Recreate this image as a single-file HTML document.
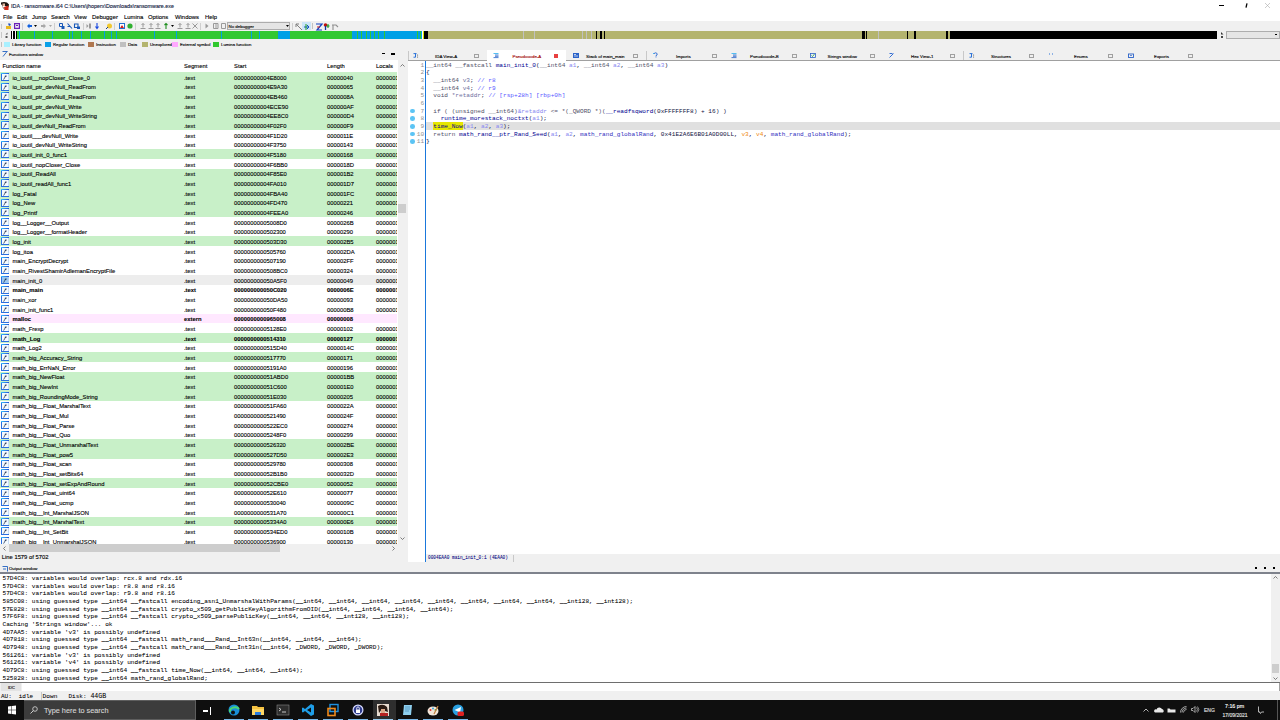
<!DOCTYPE html><html><head><meta charset="utf-8"><style>
*{margin:0;padding:0;box-sizing:border-box}
html,body{width:1280px;height:720px;overflow:hidden;background:#f0f0f0;font-family:"Liberation Sans", sans-serif;font-size:5.84px;color:#000}
.a{position:absolute}
.t{position:absolute;white-space:pre;line-height:1;-webkit-text-stroke:0.12px currentColor}
.m{font-family:"Liberation Mono", monospace;font-size:6.11px;-webkit-text-stroke:0.05px currentColor}
svg{position:absolute;overflow:visible}
</style></head><body>
<svg width="0" height="0" style="position:absolute"><defs><linearGradient id="ig" gradientUnits="userSpaceOnUse" x1="0" y1="0" x2="8" y2="0"><stop offset="0" stop-color="#38c8ff"/><stop offset="1" stop-color="#2050d8"/></linearGradient></defs></svg>
<div class="a" style="left:0px;top:0px;width:1280px;height:12px;background:#fff;"></div>
<svg style="left:1px;top:2px" width="8" height="8" viewBox="0 0 8 8"><path d="M0 0.5Q3 -0.5 6 0.5L8 2.5 7.5 5.5 5.5 4.5 3 3.5 1.5 4 0 2z" fill="#1e1410"/><path d="M1.5 1.5h2.5v2.5h-2.5z" fill="#e0b8a0"/><path d="M3 5L7.5 3.5 7.5 8 3.5 8z" fill="#d02818"/><path d="M1.5 4.5l2 3" stroke="#8a5040" stroke-width="0.8"/></svg>
<div class="t" style="left:11px;top:3.53px;font-size:5.4px;color:#102040">IDA - ransomware.i64 C:\Users\jhoperx\Downloads\ransomware.exe</div>
<div class="a" style="left:1219px;top:5px;width:5px;height:1px;background:#000;"></div>
<svg style="left:1244.5px;top:3px" width="3" height="5"><path d="M2 0.3L1 4.7" stroke="#000" stroke-width="1.3"/></svg>
<svg style="left:1265px;top:3px" width="5" height="5" viewBox="0 0 5 5"><path d="M0 0L5 5M5 0L0 5" stroke="#aaa" stroke-width="0.6"/></svg>
<div class="a" style="left:0px;top:12px;width:1280px;height:9px;background:#fff;"></div>
<div class="t" style="left:3px;top:15.11px;font-size:5.9px;">File</div>
<div class="t" style="left:17px;top:15.11px;font-size:5.9px;">Edit</div>
<div class="t" style="left:32px;top:15.11px;font-size:5.9px;">Jump</div>
<div class="t" style="left:51px;top:15.11px;font-size:5.9px;">Search</div>
<div class="t" style="left:74px;top:15.11px;font-size:5.9px;">View</div>
<div class="t" style="left:92px;top:15.11px;font-size:5.9px;">Debugger</div>
<div class="t" style="left:124px;top:15.11px;font-size:5.9px;">Lumina</div>
<div class="t" style="left:148px;top:15.11px;font-size:5.9px;">Options</div>
<div class="t" style="left:175px;top:15.11px;font-size:5.9px;">Windows</div>
<div class="t" style="left:205px;top:15.11px;font-size:5.9px;">Help</div>
<div class="a" style="left:0px;top:21px;width:1280px;height:10px;background:#f0f0f0;"></div>
<div class="a" style="left:1px;top:23.5px;width:1px;height:5px;background:#c8c8c8;"></div>
<div class="a" style="left:1px;top:32px;width:1px;height:6px;background:#c8c8c8;"></div>
<svg style="left:5px;top:32px" width="3" height="7"><path d="M2.5 0.5v2h-2z" fill="#555"/><rect x="0.5" y="4" width="2" height="2" fill="#555"/></svg>
<svg style="left:6px;top:23px" width="6" height="6" viewBox="0 0 6 6"><path d="M0 3h5v3h-5z" fill="#e8b820"/><path d="M2 0.5h2l1 1.5-2 1z" fill="#2050c0"/></svg>
<svg style="left:14px;top:23px" width="6" height="6" viewBox="0 0 6 6"><path d="M0.6 0.6h4.8v4.8h-4.8z" fill="none" stroke="#6a20b8" stroke-width="1.2"/><path d="M2 2.5h2" stroke="#6a20b8"/></svg>
<div class="a" style="left:22px;top:22.5px;width:1px;height:7px;background:#cfcfcf;"></div>
<svg style="left:27px;top:23px" width="5" height="6" viewBox="0 0 5 6"><path d="M0 3l2.5-2.5v1.5h2.5v2h-2.5v1.5z" fill="#1060e0"/></svg>
<svg style="left:34px;top:23px" width="3" height="6" viewBox="0 0 3 6"><path d="M0 2h3l-1.5 2z" fill="#000"/></svg>
<svg style="left:41px;top:23px" width="5" height="6" viewBox="0 0 5 6"><path d="M5 3l-2.5-2.5v1.5h-2.5v2h2.5v1.5z" fill="#a8a8a8"/></svg>
<svg style="left:49px;top:23px" width="3" height="6" viewBox="0 0 3 6"><path d="M0 2h3l-1.5 2z" fill="#a8a8a8"/></svg>
<div class="a" style="left:54px;top:22.5px;width:1px;height:7px;background:#cfcfcf;"></div>
<svg style="left:59px;top:23px" width="6" height="6" viewBox="0 0 6 6"><path d="M0.5 0.5h3v3h-3z" fill="none" stroke="#1858b8"/><path d="M2.5 3h3v3h-3z" fill="#1858b8"/></svg>
<svg style="left:67px;top:23px" width="6" height="6" viewBox="0 0 6 6"><path d="M0.5 0.5l4.5 5M0.5 3.5h2.5" stroke="#1858b8" stroke-width="1.1"/></svg>
<svg style="left:74px;top:23px" width="6" height="6" viewBox="0 0 6 6"><path d="M0.5 1h3.5v3.5h-3.5z" fill="none" stroke="#1858b8" stroke-width="1.1"/><path d="M3 3.5h3v2.5h-3z" fill="#1858b8"/></svg>
<div class="a" style="left:83px;top:22.5px;width:1px;height:7px;background:#cfcfcf;"></div>
<svg style="left:86px;top:23px" width="5" height="6" viewBox="0 0 5 6"><path d="M0.5 1l2 2-2 2zM3 0.5h2v5h-2z" fill="#9a9a9a"/></svg>
<svg style="left:95px;top:23px" width="4" height="6" viewBox="0 0 4 6"><path d="M2 0v5M0.5 3.5l1.5 2 1.5-2" stroke="#1848e0" stroke-width="1.1" fill="none"/></svg>
<svg style="left:106px;top:23px" width="6" height="6" viewBox="0 0 6 6"><circle cx="3.5" cy="3" r="2.5" fill="#f0c830"/><path d="M0 6l2-2" stroke="#204080"/></svg>
<div class="a" style="left:114px;top:22.5px;width:1px;height:7px;background:#cfcfcf;"></div>
<svg style="left:118.5px;top:23px" width="6" height="6" viewBox="0 0 6 6"><rect x="0.5" y="0.5" width="5" height="5" fill="#fff" stroke="#2070d0"/><path d="M1 5l2-3 2 3z" fill="#d02020"/></svg>
<svg style="left:126.5px;top:23px" width="6" height="6" viewBox="0 0 6 6"><circle cx="3" cy="3" r="2.6" fill="#30b030"/></svg>
<div class="a" style="left:135px;top:22.5px;width:1px;height:7px;background:#cfcfcf;"></div>
<svg style="left:140px;top:23px" width="6" height="6" viewBox="0 0 6 6"><path d="M0.5 5.5h5M3 0.5v4M1.5 2l1.5-1.5 1.5 1.5" stroke="#9a9a9a" fill="none"/></svg>
<svg style="left:148px;top:23px" width="6" height="6" viewBox="0 0 6 6"><path d="M0.5 5.5h5M3 0.5v4M1.5 2l1.5-1.5 1.5 1.5" stroke="#9a9a9a" fill="none"/></svg>
<svg style="left:155px;top:23px" width="6" height="6" viewBox="0 0 6 6"><path d="M0.5 5.5h5M3 0.5v4M1.5 2l1.5-1.5 1.5 1.5" stroke="#9a9a9a" fill="none"/></svg>
<svg style="left:177px;top:23px" width="6" height="6" viewBox="0 0 6 6"><path d="M0.5 5.5h5M3 0.5v4M1.5 2l1.5-1.5 1.5 1.5" stroke="#9a9a9a" fill="none"/></svg>
<svg style="left:184.5px;top:23px" width="6" height="6" viewBox="0 0 6 6"><path d="M0.5 5.5h5M3 0.5v4M1.5 2l1.5-1.5 1.5 1.5" stroke="#9a9a9a" fill="none"/></svg>
<svg style="left:164px;top:23px" width="4" height="6" viewBox="0 0 4 6"><path d="M2 6v-5.5M0.5 2l1.5-1.5 1.5 1.5" stroke="#209020" stroke-width="1.1" fill="none"/></svg>
<svg style="left:171px;top:23px" width="3" height="6" viewBox="0 0 3 6"><path d="M0 2h3l-1.5 2z" fill="#000"/></svg>
<svg style="left:192px;top:23px" width="6" height="6" viewBox="0 0 6 6"><path d="M0.5 0.5l5 5M5.5 0.5l-5 5" stroke="#9a9a9a"/></svg>
<div class="a" style="left:200px;top:22.5px;width:1px;height:7px;background:#cfcfcf;"></div>
<svg style="left:205px;top:23px" width="4" height="6" viewBox="0 0 4 6"><path d="M0.5 0.5l3 2.5-3 2.5z" fill="#9a9a9a"/></svg>
<svg style="left:212.5px;top:23px" width="6" height="6" viewBox="0 0 6 6"><path d="M0.5 0.5h4.5v5h-4.5z" fill="none" stroke="#9a9a9a"/><path d="M3 0.5v5" stroke="#9a9a9a"/></svg>
<svg style="left:220.5px;top:23px" width="5" height="6" viewBox="0 0 5 6"><path d="M0.5 0.5h4v5h-4z" fill="none" stroke="#9a9a9a"/></svg>
<div class="a" style="left:227px;top:22px;width:63px;height:8px;background:#e5e5e5;border:1px solid #adadad"></div>
<div class="t" style="left:228.5px;top:24.88px;font-size:4.4px;">No debugger</div>
<svg style="left:286px;top:25px" width="3" height="2"><path d="M0 0h3l-1.5 2z" fill="#000"/></svg>
<div class="a" style="left:292px;top:22.5px;width:1px;height:7px;background:#cfcfcf;"></div>
<svg style="left:295px;top:23px" width="6" height="6" viewBox="0 0 6 6"><path d="M1 1l6 6M1 1h3M1 1v3" stroke="#808080" fill="none"/></svg>
<div class="a" style="left:302px;top:22px;width:9px;height:8px;background:#cce4f7;"></div>
<svg style="left:303px;top:23px" width="6" height="6" viewBox="0 0 6 6"><path d="M1 4h5M4 2l2 2-2 2" stroke="#1050c0" fill="none"/><path d="M3 1v6" stroke="#20a020"/></svg>
<div class="a" style="left:312px;top:23px;width:1px;height:6px;background:#c0c0c0;"></div>
<svg style="left:315px;top:23px" width="6" height="6" viewBox="0 0 6 6"><path d="M1 1h6l-5 6h5" stroke="#1040c0" stroke-width="1.2" fill="none"/><path d="M2 4h3" stroke="#d02020"/></svg>
<svg style="left:323px;top:23px" width="6" height="6" viewBox="0 0 6 6"><circle cx="2.5" cy="2" r="1.8" fill="#c01010"/><path d="M2.5 3v4" stroke="#1030a0" stroke-width="1.3"/><path d="M5 1v4M3.5 3h3" stroke="#109010"/></svg>
<svg style="left:331px;top:23px" width="6" height="6" viewBox="0 0 6 6"><path d="M1 2h4l2 2M2 2v5" stroke="#909090" fill="none" stroke-width="1.1"/></svg>
<div class="a" style="left:11px;top:31px;width:1206px;height:8px;background:#000;"></div>
<div class="a" style="left:16.9px;top:31px;width:261.1px;height:8px;background:#32c832;"></div>
<div class="a" style="left:278px;top:31px;width:12px;height:8px;background:#00a0e6;"></div>
<div class="a" style="left:290px;top:31px;width:62px;height:8px;background:#32c832;"></div>
<div class="a" style="left:352px;top:31px;width:70px;height:8px;background:#00a0e6;"></div>
<div class="a" style="left:427.5px;top:31px;width:434.5px;height:8px;background:#b4b46e;"></div>
<div class="a" style="left:866.5px;top:31px;width:40.0px;height:8px;background:#b4b46e;"></div>
<div class="a" style="left:907.5px;top:31px;width:6.5px;height:8px;background:#b4b46e;"></div>
<div class="a" style="left:916px;top:31px;width:30px;height:8px;background:#b4b46e;"></div>
<div class="a" style="left:12px;top:31px;width:0.9px;height:8px;background:#fff;"></div>
<div class="a" style="left:14.9px;top:31px;width:1.1px;height:8px;background:#fff;"></div>
<div class="a" style="left:18.9px;top:31px;width:0.8px;height:8px;background:#00a0e6;"></div>
<div class="a" style="left:34px;top:31px;width:0.8px;height:8px;background:#00a0e6;"></div>
<div class="a" style="left:52px;top:31px;width:0.8px;height:8px;background:#00a0e6;"></div>
<div class="a" style="left:68.5px;top:31px;width:0.8px;height:8px;background:#00a0e6;"></div>
<div class="a" style="left:71.5px;top:31px;width:0.8px;height:8px;background:#00a0e6;"></div>
<div class="a" style="left:81px;top:31px;width:0.8px;height:8px;background:#00a0e6;"></div>
<div class="a" style="left:90px;top:31px;width:0.8px;height:8px;background:#00a0e6;"></div>
<div class="a" style="left:103.5px;top:31px;width:0.8px;height:8px;background:#00a0e6;"></div>
<div class="a" style="left:111px;top:31px;width:0.8px;height:8px;background:#00a0e6;"></div>
<div class="a" style="left:116px;top:31px;width:0.8px;height:8px;background:#00a0e6;"></div>
<div class="a" style="left:154px;top:31px;width:0.8px;height:8px;background:#00a0e6;"></div>
<div class="a" style="left:175.5px;top:31px;width:0.8px;height:8px;background:#00a0e6;"></div>
<div class="a" style="left:220.5px;top:31px;width:0.8px;height:8px;background:#00a0e6;"></div>
<div class="a" style="left:250.5px;top:31px;width:0.8px;height:8px;background:#00a0e6;"></div>
<div class="a" style="left:258.5px;top:31px;width:0.8px;height:8px;background:#00a0e6;"></div>
<div class="a" style="left:357px;top:31px;width:0.8px;height:8px;background:#32c832;"></div>
<div class="a" style="left:361px;top:31px;width:0.8px;height:8px;background:#32c832;"></div>
<div class="a" style="left:365.5px;top:31px;width:0.8px;height:8px;background:#32c832;"></div>
<div class="a" style="left:370px;top:31px;width:0.8px;height:8px;background:#32c832;"></div>
<div class="a" style="left:374px;top:31px;width:0.8px;height:8px;background:#32c832;"></div>
<div class="a" style="left:378px;top:31px;width:0.8px;height:8px;background:#32c832;"></div>
<div class="a" style="left:383.5px;top:31px;width:0.8px;height:8px;background:#32c832;"></div>
<div class="a" style="left:416.5px;top:31px;width:0.8px;height:8px;background:#32c832;"></div>
<div class="a" style="left:420px;top:31px;width:0.8px;height:8px;background:#32c832;"></div>
<div class="a" style="left:422px;top:31px;width:1px;height:8px;background:#fff;"></div>
<div class="a" style="left:423px;top:31px;width:1px;height:8px;background:#e0e000;"></div>
<div class="a" style="left:522.5px;top:31px;width:1px;height:8px;background:#c0c0c0;"></div>
<div class="a" style="left:533.5px;top:31px;width:1px;height:8px;background:#c0c0c0;"></div>
<div class="a" style="left:582px;top:31px;width:1px;height:8px;background:#c0c0c0;"></div>
<div class="a" style="left:586px;top:31px;width:1px;height:8px;background:#c0c0c0;"></div>
<div class="a" style="left:590.5px;top:31px;width:1px;height:8px;background:#c0c0c0;"></div>
<div class="a" style="left:877.5px;top:31px;width:1px;height:8px;background:#c0c0c0;"></div>
<div class="a" style="left:596px;top:31px;width:1px;height:8px;background:#000;"></div>
<div class="a" style="left:600px;top:31px;width:1.5px;height:8px;background:#000;"></div>
<div class="a" style="left:604px;top:31px;width:1px;height:8px;background:#000;"></div>
<div class="a" style="left:948px;top:31px;width:2px;height:8px;background:#b4b46e;"></div>
<div class="a" style="left:865.3px;top:31px;width:1px;height:8px;background:#b4b46e;"></div>
<svg style="left:1221px;top:32px" width="3" height="7"><path d="M0 0v2.5h2.5z" fill="#333"/><rect x="0" y="4" width="2" height="2" fill="#444"/></svg>
<div class="a" style="left:1226px;top:31px;width:53.5px;height:8px;background:#e5e5e5;border:1px solid #adadad"></div>
<div class="a" style="left:1275px;top:34.2px;width:2px;height:1px;background:#000;"></div>
<div class="a" style="left:1px;top:42px;width:1px;height:5px;background:#c0c0c0;"></div>
<div class="a" style="left:4px;top:42px;width:6px;height:5px;background:#a8f0ff;"></div>
<div class="t" style="left:12px;top:43.16px;font-size:4.3px;">Library function</div>
<div class="a" style="left:45px;top:42px;width:6px;height:5px;background:#0aa0e8;"></div>
<div class="t" style="left:53px;top:43.16px;font-size:4.3px;">Regular function</div>
<div class="a" style="left:88px;top:42px;width:6px;height:5px;background:#b07850;"></div>
<div class="t" style="left:96px;top:43.16px;font-size:4.3px;">Instruction</div>
<div class="a" style="left:120px;top:42px;width:6px;height:5px;background:#c0c0c0;"></div>
<div class="t" style="left:128px;top:43.16px;font-size:4.3px;">Data</div>
<div class="a" style="left:142px;top:42px;width:6px;height:5px;background:#b4b46e;"></div>
<div class="t" style="left:150px;top:43.16px;font-size:4.3px;">Unexplored</div>
<div class="a" style="left:172px;top:42px;width:6px;height:5px;background:#ffa8ff;"></div>
<div class="t" style="left:180px;top:43.16px;font-size:4.3px;">External symbol</div>
<div class="a" style="left:213px;top:42px;width:6px;height:5px;background:#30c830;"></div>
<div class="t" style="left:221px;top:43.16px;font-size:4.3px;">Lumina function</div>
<svg style="left:2px;top:51px" width="6" height="6" viewBox="0 0 6 6"><path d="M0.5 0.5h5M1 5.5l4-5" stroke="#2060c0" stroke-width="0.9" fill="none"/></svg>
<div class="t" style="left:9px;top:52.56px;font-size:4.3px;">Functions window</div>
<div class="a" style="left:381.5px;top:53.3px;width:3.5px;height:1px;background:#000;"></div>
<div class="a" style="left:391px;top:53px;width:3.5px;height:1.6px;background:#000;"></div>
<div class="a" style="left:408px;top:51px;width:1px;height:10px;background:#c8c8c8;"></div>
<div class="a" style="left:0px;top:60px;width:398px;height:483.5px;background:#fff;"></div>
<div class="t" style="left:2.4px;top:63.96px;font-size:5.84px;">Function name</div>
<div class="t" style="left:184px;top:63.96px;font-size:5.84px;">Segment</div>
<div class="t" style="left:234px;top:63.96px;font-size:5.84px;">Start</div>
<div class="t" style="left:327px;top:63.96px;font-size:5.84px;">Length</div>
<div class="t" style="left:376px;top:63.96px;font-size:5.84px;">Locals</div>
<div class="a" style="left:0;top:60px;width:397px;height:483.5px;overflow:hidden">
<div class="a" style="left:0px;top:12.0px;width:397px;height:9.68px;background:#c8f0c8"></div>
<svg style="left:1px;top:12.9px" width="8" height="8" viewBox="0 0 8 8"><rect x="0" y="0" width="8" height="8" fill="#f4faff"/><path d="M0.5 0v8M0 7.5h8" stroke="#2a6ee0"/><path d="M0 0.5h8" stroke="url(#ig)"/><path d="M7.6 1v6" stroke="#b8d0f0" stroke-width="0.8"/><path d="M2.6 6.6l2.4-4.2M3.8 3.3h1.8" stroke="#102040" stroke-width="0.7"/></svg>
<div class="t" style="left:12.5px;top:15.66px;">io_ioutil__nopCloser_Close_0</div>
<div class="t" style="left:184px;top:15.66px;">.text</div>
<div class="t" style="left:234px;top:15.66px;">00000000004E8000</div>
<div class="t" style="left:327px;top:15.66px;">00000040</div>
<div class="t" style="left:376px;top:15.66px;">00000010</div>
<div class="a" style="left:0px;top:21.67px;width:397px;height:9.68px;background:#c8f0c8"></div>
<svg style="left:1px;top:22.57px" width="8" height="8" viewBox="0 0 8 8"><rect x="0" y="0" width="8" height="8" fill="#f4faff"/><path d="M0.5 0v8M0 7.5h8" stroke="#2a6ee0"/><path d="M0 0.5h8" stroke="url(#ig)"/><path d="M7.6 1v6" stroke="#b8d0f0" stroke-width="0.8"/><path d="M2.6 6.6l2.4-4.2M3.8 3.3h1.8" stroke="#102040" stroke-width="0.7"/></svg>
<div class="t" style="left:12.5px;top:25.33px;">io_ioutil_ptr_devNull_ReadFrom</div>
<div class="t" style="left:184px;top:25.33px;">.text</div>
<div class="t" style="left:234px;top:25.33px;">00000000004E9A30</div>
<div class="t" style="left:327px;top:25.33px;">00000065</div>
<div class="t" style="left:376px;top:25.33px;">00000010</div>
<div class="a" style="left:0px;top:31.33px;width:397px;height:9.68px;background:#c8f0c8"></div>
<svg style="left:1px;top:32.23px" width="8" height="8" viewBox="0 0 8 8"><rect x="0" y="0" width="8" height="8" fill="#f4faff"/><path d="M0.5 0v8M0 7.5h8" stroke="#2a6ee0"/><path d="M0 0.5h8" stroke="url(#ig)"/><path d="M7.6 1v6" stroke="#b8d0f0" stroke-width="0.8"/><path d="M2.6 6.6l2.4-4.2M3.8 3.3h1.8" stroke="#102040" stroke-width="0.7"/></svg>
<div class="t" style="left:12.5px;top:34.99px;">io_ioutil_ptr_devNull_ReadFrom</div>
<div class="t" style="left:184px;top:34.99px;">.text</div>
<div class="t" style="left:234px;top:34.99px;">00000000004EB460</div>
<div class="t" style="left:327px;top:34.99px;">0000008A</div>
<div class="t" style="left:376px;top:34.99px;">00000010</div>
<div class="a" style="left:0px;top:41.0px;width:397px;height:9.68px;background:#c8f0c8"></div>
<svg style="left:1px;top:41.9px" width="8" height="8" viewBox="0 0 8 8"><rect x="0" y="0" width="8" height="8" fill="#f4faff"/><path d="M0.5 0v8M0 7.5h8" stroke="#2a6ee0"/><path d="M0 0.5h8" stroke="url(#ig)"/><path d="M7.6 1v6" stroke="#b8d0f0" stroke-width="0.8"/><path d="M2.6 6.6l2.4-4.2M3.8 3.3h1.8" stroke="#102040" stroke-width="0.7"/></svg>
<div class="t" style="left:12.5px;top:44.66px;">io_ioutil_ptr_devNull_Write</div>
<div class="t" style="left:184px;top:44.66px;">.text</div>
<div class="t" style="left:234px;top:44.66px;">00000000004ECE90</div>
<div class="t" style="left:327px;top:44.66px;">000000AF</div>
<div class="t" style="left:376px;top:44.66px;">00000010</div>
<div class="a" style="left:0px;top:50.67px;width:397px;height:9.68px;background:#c8f0c8"></div>
<svg style="left:1px;top:51.57px" width="8" height="8" viewBox="0 0 8 8"><rect x="0" y="0" width="8" height="8" fill="#f4faff"/><path d="M0.5 0v8M0 7.5h8" stroke="#2a6ee0"/><path d="M0 0.5h8" stroke="url(#ig)"/><path d="M7.6 1v6" stroke="#b8d0f0" stroke-width="0.8"/><path d="M2.6 6.6l2.4-4.2M3.8 3.3h1.8" stroke="#102040" stroke-width="0.7"/></svg>
<div class="t" style="left:12.5px;top:54.33px;">io_ioutil_ptr_devNull_WriteString</div>
<div class="t" style="left:184px;top:54.33px;">.text</div>
<div class="t" style="left:234px;top:54.33px;">00000000004EE8C0</div>
<div class="t" style="left:327px;top:54.33px;">000000D4</div>
<div class="t" style="left:376px;top:54.33px;">00000010</div>
<div class="a" style="left:0px;top:60.33px;width:397px;height:9.68px;background:#c8f0c8"></div>
<svg style="left:1px;top:61.23px" width="8" height="8" viewBox="0 0 8 8"><rect x="0" y="0" width="8" height="8" fill="#f4faff"/><path d="M0.5 0v8M0 7.5h8" stroke="#2a6ee0"/><path d="M0 0.5h8" stroke="url(#ig)"/><path d="M7.6 1v6" stroke="#b8d0f0" stroke-width="0.8"/><path d="M2.6 6.6l2.4-4.2M3.8 3.3h1.8" stroke="#102040" stroke-width="0.7"/></svg>
<div class="t" style="left:12.5px;top:63.99px;">io_ioutil_devNull_ReadFrom</div>
<div class="t" style="left:184px;top:63.99px;">.text</div>
<div class="t" style="left:234px;top:63.99px;">00000000004F02F0</div>
<div class="t" style="left:327px;top:63.99px;">000000F9</div>
<div class="t" style="left:376px;top:63.99px;">00000010</div>
<svg style="left:1px;top:70.9px" width="8" height="8" viewBox="0 0 8 8"><rect x="0" y="0" width="8" height="8" fill="#f4faff"/><path d="M0.5 0v8M0 7.5h8" stroke="#2a6ee0"/><path d="M0 0.5h8" stroke="url(#ig)"/><path d="M7.6 1v6" stroke="#b8d0f0" stroke-width="0.8"/><path d="M2.6 6.6l2.4-4.2M3.8 3.3h1.8" stroke="#102040" stroke-width="0.7"/></svg>
<div class="t" style="left:12.5px;top:73.66px;">io_ioutil___devNull_Write</div>
<div class="t" style="left:184px;top:73.66px;">.text</div>
<div class="t" style="left:234px;top:73.66px;">00000000004F1D20</div>
<div class="t" style="left:327px;top:73.66px;">0000011E</div>
<div class="t" style="left:376px;top:73.66px;">00000010</div>
<svg style="left:1px;top:80.57px" width="8" height="8" viewBox="0 0 8 8"><rect x="0" y="0" width="8" height="8" fill="#f4faff"/><path d="M0.5 0v8M0 7.5h8" stroke="#2a6ee0"/><path d="M0 0.5h8" stroke="url(#ig)"/><path d="M7.6 1v6" stroke="#b8d0f0" stroke-width="0.8"/><path d="M2.6 6.6l2.4-4.2M3.8 3.3h1.8" stroke="#102040" stroke-width="0.7"/></svg>
<div class="t" style="left:12.5px;top:83.33px;">io_ioutil_devNull_WriteString</div>
<div class="t" style="left:184px;top:83.33px;">.text</div>
<div class="t" style="left:234px;top:83.33px;">00000000004F3750</div>
<div class="t" style="left:327px;top:83.33px;">00000143</div>
<div class="t" style="left:376px;top:83.33px;">00000010</div>
<div class="a" style="left:0px;top:89.33px;width:397px;height:9.68px;background:#c8f0c8"></div>
<svg style="left:1px;top:90.23px" width="8" height="8" viewBox="0 0 8 8"><rect x="0" y="0" width="8" height="8" fill="#f4faff"/><path d="M0.5 0v8M0 7.5h8" stroke="#2a6ee0"/><path d="M0 0.5h8" stroke="url(#ig)"/><path d="M7.6 1v6" stroke="#b8d0f0" stroke-width="0.8"/><path d="M2.6 6.6l2.4-4.2M3.8 3.3h1.8" stroke="#102040" stroke-width="0.7"/></svg>
<div class="t" style="left:12.5px;top:92.99px;">io_ioutil_init_0_func1</div>
<div class="t" style="left:184px;top:92.99px;">.text</div>
<div class="t" style="left:234px;top:92.99px;">00000000004F5180</div>
<div class="t" style="left:327px;top:92.99px;">00000168</div>
<div class="t" style="left:376px;top:92.99px;">00000010</div>
<svg style="left:1px;top:99.9px" width="8" height="8" viewBox="0 0 8 8"><rect x="0" y="0" width="8" height="8" fill="#f4faff"/><path d="M0.5 0v8M0 7.5h8" stroke="#2a6ee0"/><path d="M0 0.5h8" stroke="url(#ig)"/><path d="M7.6 1v6" stroke="#b8d0f0" stroke-width="0.8"/><path d="M2.6 6.6l2.4-4.2M3.8 3.3h1.8" stroke="#102040" stroke-width="0.7"/></svg>
<div class="t" style="left:12.5px;top:102.66px;">io_ioutil_nopCloser_Close</div>
<div class="t" style="left:184px;top:102.66px;">.text</div>
<div class="t" style="left:234px;top:102.66px;">00000000004F6BB0</div>
<div class="t" style="left:327px;top:102.66px;">0000018D</div>
<div class="t" style="left:376px;top:102.66px;">00000010</div>
<div class="a" style="left:0px;top:108.67px;width:397px;height:9.68px;background:#c8f0c8"></div>
<svg style="left:1px;top:109.57px" width="8" height="8" viewBox="0 0 8 8"><rect x="0" y="0" width="8" height="8" fill="#f4faff"/><path d="M0.5 0v8M0 7.5h8" stroke="#2a6ee0"/><path d="M0 0.5h8" stroke="url(#ig)"/><path d="M7.6 1v6" stroke="#b8d0f0" stroke-width="0.8"/><path d="M2.6 6.6l2.4-4.2M3.8 3.3h1.8" stroke="#102040" stroke-width="0.7"/></svg>
<div class="t" style="left:12.5px;top:112.33px;">io_ioutil_ReadAll</div>
<div class="t" style="left:184px;top:112.33px;">.text</div>
<div class="t" style="left:234px;top:112.33px;">00000000004F85E0</div>
<div class="t" style="left:327px;top:112.33px;">000001B2</div>
<div class="t" style="left:376px;top:112.33px;">00000010</div>
<div class="a" style="left:0px;top:118.33px;width:397px;height:9.68px;background:#c8f0c8"></div>
<svg style="left:1px;top:119.23px" width="8" height="8" viewBox="0 0 8 8"><rect x="0" y="0" width="8" height="8" fill="#f4faff"/><path d="M0.5 0v8M0 7.5h8" stroke="#2a6ee0"/><path d="M0 0.5h8" stroke="url(#ig)"/><path d="M7.6 1v6" stroke="#b8d0f0" stroke-width="0.8"/><path d="M2.6 6.6l2.4-4.2M3.8 3.3h1.8" stroke="#102040" stroke-width="0.7"/></svg>
<div class="t" style="left:12.5px;top:121.99px;">io_ioutil_readAll_func1</div>
<div class="t" style="left:184px;top:121.99px;">.text</div>
<div class="t" style="left:234px;top:121.99px;">00000000004FA010</div>
<div class="t" style="left:327px;top:121.99px;">000001D7</div>
<div class="t" style="left:376px;top:121.99px;">00000010</div>
<div class="a" style="left:0px;top:128.0px;width:397px;height:9.68px;background:#c8f0c8"></div>
<svg style="left:1px;top:128.9px" width="8" height="8" viewBox="0 0 8 8"><rect x="0" y="0" width="8" height="8" fill="#f4faff"/><path d="M0.5 0v8M0 7.5h8" stroke="#2a6ee0"/><path d="M0 0.5h8" stroke="url(#ig)"/><path d="M7.6 1v6" stroke="#b8d0f0" stroke-width="0.8"/><path d="M2.6 6.6l2.4-4.2M3.8 3.3h1.8" stroke="#102040" stroke-width="0.7"/></svg>
<div class="t" style="left:12.5px;top:131.66px;">log_Fatal</div>
<div class="t" style="left:184px;top:131.66px;">.text</div>
<div class="t" style="left:234px;top:131.66px;">00000000004FBA40</div>
<div class="t" style="left:327px;top:131.66px;">000001FC</div>
<div class="t" style="left:376px;top:131.66px;">00000010</div>
<div class="a" style="left:0px;top:137.67px;width:397px;height:9.68px;background:#c8f0c8"></div>
<svg style="left:1px;top:138.57px" width="8" height="8" viewBox="0 0 8 8"><rect x="0" y="0" width="8" height="8" fill="#f4faff"/><path d="M0.5 0v8M0 7.5h8" stroke="#2a6ee0"/><path d="M0 0.5h8" stroke="url(#ig)"/><path d="M7.6 1v6" stroke="#b8d0f0" stroke-width="0.8"/><path d="M2.6 6.6l2.4-4.2M3.8 3.3h1.8" stroke="#102040" stroke-width="0.7"/></svg>
<div class="t" style="left:12.5px;top:141.33px;">log_New</div>
<div class="t" style="left:184px;top:141.33px;">.text</div>
<div class="t" style="left:234px;top:141.33px;">00000000004FD470</div>
<div class="t" style="left:327px;top:141.33px;">00000221</div>
<div class="t" style="left:376px;top:141.33px;">00000010</div>
<div class="a" style="left:0px;top:147.33px;width:397px;height:9.68px;background:#c8f0c8"></div>
<svg style="left:1px;top:148.23px" width="8" height="8" viewBox="0 0 8 8"><rect x="0" y="0" width="8" height="8" fill="#f4faff"/><path d="M0.5 0v8M0 7.5h8" stroke="#2a6ee0"/><path d="M0 0.5h8" stroke="url(#ig)"/><path d="M7.6 1v6" stroke="#b8d0f0" stroke-width="0.8"/><path d="M2.6 6.6l2.4-4.2M3.8 3.3h1.8" stroke="#102040" stroke-width="0.7"/></svg>
<div class="t" style="left:12.5px;top:150.99px;">log_Printf</div>
<div class="t" style="left:184px;top:150.99px;">.text</div>
<div class="t" style="left:234px;top:150.99px;">00000000004FEEA0</div>
<div class="t" style="left:327px;top:150.99px;">00000246</div>
<div class="t" style="left:376px;top:150.99px;">00000010</div>
<svg style="left:1px;top:157.9px" width="8" height="8" viewBox="0 0 8 8"><rect x="0" y="0" width="8" height="8" fill="#f4faff"/><path d="M0.5 0v8M0 7.5h8" stroke="#2a6ee0"/><path d="M0 0.5h8" stroke="url(#ig)"/><path d="M7.6 1v6" stroke="#b8d0f0" stroke-width="0.8"/><path d="M2.6 6.6l2.4-4.2M3.8 3.3h1.8" stroke="#102040" stroke-width="0.7"/></svg>
<div class="t" style="left:12.5px;top:160.66px;">log__Logger__Output</div>
<div class="t" style="left:184px;top:160.66px;">.text</div>
<div class="t" style="left:234px;top:160.66px;">00000000005008D0</div>
<div class="t" style="left:327px;top:160.66px;">0000026B</div>
<div class="t" style="left:376px;top:160.66px;">00000010</div>
<svg style="left:1px;top:167.57px" width="8" height="8" viewBox="0 0 8 8"><rect x="0" y="0" width="8" height="8" fill="#f4faff"/><path d="M0.5 0v8M0 7.5h8" stroke="#2a6ee0"/><path d="M0 0.5h8" stroke="url(#ig)"/><path d="M7.6 1v6" stroke="#b8d0f0" stroke-width="0.8"/><path d="M2.6 6.6l2.4-4.2M3.8 3.3h1.8" stroke="#102040" stroke-width="0.7"/></svg>
<div class="t" style="left:12.5px;top:170.33px;">log__Logger__formatHeader</div>
<div class="t" style="left:184px;top:170.33px;">.text</div>
<div class="t" style="left:234px;top:170.33px;">0000000000502300</div>
<div class="t" style="left:327px;top:170.33px;">00000290</div>
<div class="t" style="left:376px;top:170.33px;">00000010</div>
<div class="a" style="left:0px;top:176.33px;width:397px;height:9.68px;background:#c8f0c8"></div>
<svg style="left:1px;top:177.23px" width="8" height="8" viewBox="0 0 8 8"><rect x="0" y="0" width="8" height="8" fill="#f4faff"/><path d="M0.5 0v8M0 7.5h8" stroke="#2a6ee0"/><path d="M0 0.5h8" stroke="url(#ig)"/><path d="M7.6 1v6" stroke="#b8d0f0" stroke-width="0.8"/><path d="M2.6 6.6l2.4-4.2M3.8 3.3h1.8" stroke="#102040" stroke-width="0.7"/></svg>
<div class="t" style="left:12.5px;top:179.99px;">log_init</div>
<div class="t" style="left:184px;top:179.99px;">.text</div>
<div class="t" style="left:234px;top:179.99px;">0000000000503D30</div>
<div class="t" style="left:327px;top:179.99px;">000002B5</div>
<div class="t" style="left:376px;top:179.99px;">00000010</div>
<svg style="left:1px;top:186.9px" width="8" height="8" viewBox="0 0 8 8"><rect x="0" y="0" width="8" height="8" fill="#f4faff"/><path d="M0.5 0v8M0 7.5h8" stroke="#2a6ee0"/><path d="M0 0.5h8" stroke="url(#ig)"/><path d="M7.6 1v6" stroke="#b8d0f0" stroke-width="0.8"/><path d="M2.6 6.6l2.4-4.2M3.8 3.3h1.8" stroke="#102040" stroke-width="0.7"/></svg>
<div class="t" style="left:12.5px;top:189.66px;">log_itoa</div>
<div class="t" style="left:184px;top:189.66px;">.text</div>
<div class="t" style="left:234px;top:189.66px;">0000000000505760</div>
<div class="t" style="left:327px;top:189.66px;">000002DA</div>
<div class="t" style="left:376px;top:189.66px;">00000010</div>
<svg style="left:1px;top:196.57px" width="8" height="8" viewBox="0 0 8 8"><rect x="0" y="0" width="8" height="8" fill="#f4faff"/><path d="M0.5 0v8M0 7.5h8" stroke="#2a6ee0"/><path d="M0 0.5h8" stroke="url(#ig)"/><path d="M7.6 1v6" stroke="#b8d0f0" stroke-width="0.8"/><path d="M2.6 6.6l2.4-4.2M3.8 3.3h1.8" stroke="#102040" stroke-width="0.7"/></svg>
<div class="t" style="left:12.5px;top:199.33px;">main_EncryptDecrypt</div>
<div class="t" style="left:184px;top:199.33px;">.text</div>
<div class="t" style="left:234px;top:199.33px;">0000000000507190</div>
<div class="t" style="left:327px;top:199.33px;">000002FF</div>
<div class="t" style="left:376px;top:199.33px;">00000010</div>
<svg style="left:1px;top:206.23px" width="8" height="8" viewBox="0 0 8 8"><rect x="0" y="0" width="8" height="8" fill="#f4faff"/><path d="M0.5 0v8M0 7.5h8" stroke="#2a6ee0"/><path d="M0 0.5h8" stroke="url(#ig)"/><path d="M7.6 1v6" stroke="#b8d0f0" stroke-width="0.8"/><path d="M2.6 6.6l2.4-4.2M3.8 3.3h1.8" stroke="#102040" stroke-width="0.7"/></svg>
<div class="t" style="left:12.5px;top:208.99px;">main_RivestShamirAdlemanEncryptFile</div>
<div class="t" style="left:184px;top:208.99px;">.text</div>
<div class="t" style="left:234px;top:208.99px;">0000000000508BC0</div>
<div class="t" style="left:327px;top:208.99px;">00000324</div>
<div class="t" style="left:376px;top:208.99px;">00000010</div>
<div class="a" style="left:10px;top:215.0px;width:387px;height:9.68px;background:#ededed"></div>
<svg style="left:1px;top:215.9px" width="8" height="8" viewBox="0 0 8 8"><rect x="0" y="0" width="8" height="8" fill="#9cc8f0"/><path d="M0.5 0v8M0 7.5h8" stroke="#2a6ee0"/><path d="M0 0.5h8" stroke="url(#ig)"/><path d="M7.6 1v6" stroke="#b8d0f0" stroke-width="0.8"/><path d="M2.6 6.6l2.4-4.2M3.8 3.3h1.8" stroke="#102040" stroke-width="0.7"/></svg>
<div class="t" style="left:12.5px;top:218.66px;">main_init_0</div>
<div class="t" style="left:184px;top:218.66px;">.text</div>
<div class="t" style="left:234px;top:218.66px;">000000000050A5F0</div>
<div class="t" style="left:327px;top:218.66px;">00000049</div>
<div class="t" style="left:376px;top:218.66px;">00000010</div>
<svg style="left:1px;top:225.57px" width="8" height="8" viewBox="0 0 8 8"><rect x="0" y="0" width="8" height="8" fill="#f4faff"/><path d="M0.5 0v8M0 7.5h8" stroke="#2a6ee0"/><path d="M0 0.5h8" stroke="url(#ig)"/><path d="M7.6 1v6" stroke="#b8d0f0" stroke-width="0.8"/><path d="M2.6 6.6l2.4-4.2M3.8 3.3h1.8" stroke="#102040" stroke-width="0.7"/></svg>
<div class="t" style="left:12.5px;top:228.33px;font-weight:bold;">main_main</div>
<div class="t" style="left:184px;top:228.33px;font-weight:bold;">.text</div>
<div class="t" style="left:234px;top:228.33px;font-weight:bold;">000000000050C020</div>
<div class="t" style="left:327px;top:228.33px;font-weight:bold;">0000006E</div>
<div class="t" style="left:376px;top:228.33px;font-weight:bold;">00000010</div>
<svg style="left:1px;top:235.23px" width="8" height="8" viewBox="0 0 8 8"><rect x="0" y="0" width="8" height="8" fill="#f4faff"/><path d="M0.5 0v8M0 7.5h8" stroke="#2a6ee0"/><path d="M0 0.5h8" stroke="url(#ig)"/><path d="M7.6 1v6" stroke="#b8d0f0" stroke-width="0.8"/><path d="M2.6 6.6l2.4-4.2M3.8 3.3h1.8" stroke="#102040" stroke-width="0.7"/></svg>
<div class="t" style="left:12.5px;top:237.99px;">main_xor</div>
<div class="t" style="left:184px;top:237.99px;">.text</div>
<div class="t" style="left:234px;top:237.99px;">000000000050DA50</div>
<div class="t" style="left:327px;top:237.99px;">00000093</div>
<div class="t" style="left:376px;top:237.99px;">00000010</div>
<svg style="left:1px;top:244.9px" width="8" height="8" viewBox="0 0 8 8"><rect x="0" y="0" width="8" height="8" fill="#f4faff"/><path d="M0.5 0v8M0 7.5h8" stroke="#2a6ee0"/><path d="M0 0.5h8" stroke="url(#ig)"/><path d="M7.6 1v6" stroke="#b8d0f0" stroke-width="0.8"/><path d="M2.6 6.6l2.4-4.2M3.8 3.3h1.8" stroke="#102040" stroke-width="0.7"/></svg>
<div class="t" style="left:12.5px;top:247.66px;">main_init_func1</div>
<div class="t" style="left:184px;top:247.66px;">.text</div>
<div class="t" style="left:234px;top:247.66px;">000000000050F480</div>
<div class="t" style="left:327px;top:247.66px;">000000B8</div>
<div class="t" style="left:376px;top:247.66px;">00000010</div>
<div class="a" style="left:0px;top:253.67px;width:397px;height:9.68px;background:#ffe8ff"></div>
<svg style="left:1px;top:254.57px" width="8" height="8" viewBox="0 0 8 8"><rect x="0" y="0" width="8" height="8" fill="#f4faff"/><path d="M0.5 0v8M0 7.5h8" stroke="#2a6ee0"/><path d="M0 0.5h8" stroke="url(#ig)"/><path d="M7.6 1v6" stroke="#b8d0f0" stroke-width="0.8"/><path d="M2.6 6.6l2.4-4.2M3.8 3.3h1.8" stroke="#102040" stroke-width="0.7"/></svg>
<div class="t" style="left:12.5px;top:257.33px;font-weight:bold;">malloc</div>
<div class="t" style="left:184px;top:257.33px;font-weight:bold;">extern</div>
<div class="t" style="left:234px;top:257.33px;font-weight:bold;">0000000000965008</div>
<div class="t" style="left:327px;top:257.33px;font-weight:bold;">00000008</div>
<svg style="left:1px;top:264.23px" width="8" height="8" viewBox="0 0 8 8"><rect x="0" y="0" width="8" height="8" fill="#f4faff"/><path d="M0.5 0v8M0 7.5h8" stroke="#2a6ee0"/><path d="M0 0.5h8" stroke="url(#ig)"/><path d="M7.6 1v6" stroke="#b8d0f0" stroke-width="0.8"/><path d="M2.6 6.6l2.4-4.2M3.8 3.3h1.8" stroke="#102040" stroke-width="0.7"/></svg>
<div class="t" style="left:12.5px;top:266.99px;">math_Frexp</div>
<div class="t" style="left:184px;top:266.99px;">.text</div>
<div class="t" style="left:234px;top:266.99px;">00000000005128E0</div>
<div class="t" style="left:327px;top:266.99px;">00000102</div>
<div class="t" style="left:376px;top:266.99px;">00000010</div>
<div class="a" style="left:0px;top:273.0px;width:397px;height:9.68px;background:#c8f0c8"></div>
<svg style="left:1px;top:273.9px" width="8" height="8" viewBox="0 0 8 8"><rect x="0" y="0" width="8" height="8" fill="#f4faff"/><path d="M0.5 0v8M0 7.5h8" stroke="#2a6ee0"/><path d="M0 0.5h8" stroke="url(#ig)"/><path d="M7.6 1v6" stroke="#b8d0f0" stroke-width="0.8"/><path d="M2.6 6.6l2.4-4.2M3.8 3.3h1.8" stroke="#102040" stroke-width="0.7"/></svg>
<div class="t" style="left:12.5px;top:276.66px;font-weight:bold;">math_Log</div>
<div class="t" style="left:184px;top:276.66px;font-weight:bold;">.text</div>
<div class="t" style="left:234px;top:276.66px;font-weight:bold;">0000000000514310</div>
<div class="t" style="left:327px;top:276.66px;font-weight:bold;">00000127</div>
<div class="t" style="left:376px;top:276.66px;font-weight:bold;">00000010</div>
<svg style="left:1px;top:283.57px" width="8" height="8" viewBox="0 0 8 8"><rect x="0" y="0" width="8" height="8" fill="#f4faff"/><path d="M0.5 0v8M0 7.5h8" stroke="#2a6ee0"/><path d="M0 0.5h8" stroke="url(#ig)"/><path d="M7.6 1v6" stroke="#b8d0f0" stroke-width="0.8"/><path d="M2.6 6.6l2.4-4.2M3.8 3.3h1.8" stroke="#102040" stroke-width="0.7"/></svg>
<div class="t" style="left:12.5px;top:286.33px;">math_Log2</div>
<div class="t" style="left:184px;top:286.33px;">.text</div>
<div class="t" style="left:234px;top:286.33px;">0000000000515D40</div>
<div class="t" style="left:327px;top:286.33px;">0000014C</div>
<div class="t" style="left:376px;top:286.33px;">00000010</div>
<div class="a" style="left:0px;top:292.33px;width:397px;height:9.68px;background:#c8f0c8"></div>
<svg style="left:1px;top:293.23px" width="8" height="8" viewBox="0 0 8 8"><rect x="0" y="0" width="8" height="8" fill="#f4faff"/><path d="M0.5 0v8M0 7.5h8" stroke="#2a6ee0"/><path d="M0 0.5h8" stroke="url(#ig)"/><path d="M7.6 1v6" stroke="#b8d0f0" stroke-width="0.8"/><path d="M2.6 6.6l2.4-4.2M3.8 3.3h1.8" stroke="#102040" stroke-width="0.7"/></svg>
<div class="t" style="left:12.5px;top:295.99px;">math_big_Accuracy_String</div>
<div class="t" style="left:184px;top:295.99px;">.text</div>
<div class="t" style="left:234px;top:295.99px;">0000000000517770</div>
<div class="t" style="left:327px;top:295.99px;">00000171</div>
<div class="t" style="left:376px;top:295.99px;">00000010</div>
<svg style="left:1px;top:302.9px" width="8" height="8" viewBox="0 0 8 8"><rect x="0" y="0" width="8" height="8" fill="#f4faff"/><path d="M0.5 0v8M0 7.5h8" stroke="#2a6ee0"/><path d="M0 0.5h8" stroke="url(#ig)"/><path d="M7.6 1v6" stroke="#b8d0f0" stroke-width="0.8"/><path d="M2.6 6.6l2.4-4.2M3.8 3.3h1.8" stroke="#102040" stroke-width="0.7"/></svg>
<div class="t" style="left:12.5px;top:305.66px;">math_big_ErrNaN_Error</div>
<div class="t" style="left:184px;top:305.66px;">.text</div>
<div class="t" style="left:234px;top:305.66px;">00000000005191A0</div>
<div class="t" style="left:327px;top:305.66px;">00000196</div>
<div class="t" style="left:376px;top:305.66px;">00000010</div>
<div class="a" style="left:0px;top:311.67px;width:397px;height:9.68px;background:#c8f0c8"></div>
<svg style="left:1px;top:312.57px" width="8" height="8" viewBox="0 0 8 8"><rect x="0" y="0" width="8" height="8" fill="#f4faff"/><path d="M0.5 0v8M0 7.5h8" stroke="#2a6ee0"/><path d="M0 0.5h8" stroke="url(#ig)"/><path d="M7.6 1v6" stroke="#b8d0f0" stroke-width="0.8"/><path d="M2.6 6.6l2.4-4.2M3.8 3.3h1.8" stroke="#102040" stroke-width="0.7"/></svg>
<div class="t" style="left:12.5px;top:315.33px;">math_big_NewFloat</div>
<div class="t" style="left:184px;top:315.33px;">.text</div>
<div class="t" style="left:234px;top:315.33px;">000000000051ABD0</div>
<div class="t" style="left:327px;top:315.33px;">000001BB</div>
<div class="t" style="left:376px;top:315.33px;">00000010</div>
<div class="a" style="left:0px;top:321.33px;width:397px;height:9.68px;background:#c8f0c8"></div>
<svg style="left:1px;top:322.23px" width="8" height="8" viewBox="0 0 8 8"><rect x="0" y="0" width="8" height="8" fill="#f4faff"/><path d="M0.5 0v8M0 7.5h8" stroke="#2a6ee0"/><path d="M0 0.5h8" stroke="url(#ig)"/><path d="M7.6 1v6" stroke="#b8d0f0" stroke-width="0.8"/><path d="M2.6 6.6l2.4-4.2M3.8 3.3h1.8" stroke="#102040" stroke-width="0.7"/></svg>
<div class="t" style="left:12.5px;top:324.99px;">math_big_NewInt</div>
<div class="t" style="left:184px;top:324.99px;">.text</div>
<div class="t" style="left:234px;top:324.99px;">000000000051C600</div>
<div class="t" style="left:327px;top:324.99px;">000001E0</div>
<div class="t" style="left:376px;top:324.99px;">00000010</div>
<div class="a" style="left:0px;top:331.0px;width:397px;height:9.68px;background:#c8f0c8"></div>
<svg style="left:1px;top:331.9px" width="8" height="8" viewBox="0 0 8 8"><rect x="0" y="0" width="8" height="8" fill="#f4faff"/><path d="M0.5 0v8M0 7.5h8" stroke="#2a6ee0"/><path d="M0 0.5h8" stroke="url(#ig)"/><path d="M7.6 1v6" stroke="#b8d0f0" stroke-width="0.8"/><path d="M2.6 6.6l2.4-4.2M3.8 3.3h1.8" stroke="#102040" stroke-width="0.7"/></svg>
<div class="t" style="left:12.5px;top:334.66px;">math_big_RoundingMode_String</div>
<div class="t" style="left:184px;top:334.66px;">.text</div>
<div class="t" style="left:234px;top:334.66px;">000000000051E030</div>
<div class="t" style="left:327px;top:334.66px;">00000205</div>
<div class="t" style="left:376px;top:334.66px;">00000010</div>
<svg style="left:1px;top:341.57px" width="8" height="8" viewBox="0 0 8 8"><rect x="0" y="0" width="8" height="8" fill="#f4faff"/><path d="M0.5 0v8M0 7.5h8" stroke="#2a6ee0"/><path d="M0 0.5h8" stroke="url(#ig)"/><path d="M7.6 1v6" stroke="#b8d0f0" stroke-width="0.8"/><path d="M2.6 6.6l2.4-4.2M3.8 3.3h1.8" stroke="#102040" stroke-width="0.7"/></svg>
<div class="t" style="left:12.5px;top:344.33px;">math_big__Float_MarshalText</div>
<div class="t" style="left:184px;top:344.33px;">.text</div>
<div class="t" style="left:234px;top:344.33px;">000000000051FA60</div>
<div class="t" style="left:327px;top:344.33px;">0000022A</div>
<div class="t" style="left:376px;top:344.33px;">00000010</div>
<svg style="left:1px;top:351.23px" width="8" height="8" viewBox="0 0 8 8"><rect x="0" y="0" width="8" height="8" fill="#f4faff"/><path d="M0.5 0v8M0 7.5h8" stroke="#2a6ee0"/><path d="M0 0.5h8" stroke="url(#ig)"/><path d="M7.6 1v6" stroke="#b8d0f0" stroke-width="0.8"/><path d="M2.6 6.6l2.4-4.2M3.8 3.3h1.8" stroke="#102040" stroke-width="0.7"/></svg>
<div class="t" style="left:12.5px;top:353.99px;">math_big__Float_Mul</div>
<div class="t" style="left:184px;top:353.99px;">.text</div>
<div class="t" style="left:234px;top:353.99px;">0000000000521490</div>
<div class="t" style="left:327px;top:353.99px;">0000024F</div>
<div class="t" style="left:376px;top:353.99px;">00000010</div>
<svg style="left:1px;top:360.9px" width="8" height="8" viewBox="0 0 8 8"><rect x="0" y="0" width="8" height="8" fill="#f4faff"/><path d="M0.5 0v8M0 7.5h8" stroke="#2a6ee0"/><path d="M0 0.5h8" stroke="url(#ig)"/><path d="M7.6 1v6" stroke="#b8d0f0" stroke-width="0.8"/><path d="M2.6 6.6l2.4-4.2M3.8 3.3h1.8" stroke="#102040" stroke-width="0.7"/></svg>
<div class="t" style="left:12.5px;top:363.66px;">math_big__Float_Parse</div>
<div class="t" style="left:184px;top:363.66px;">.text</div>
<div class="t" style="left:234px;top:363.66px;">0000000000522EC0</div>
<div class="t" style="left:327px;top:363.66px;">00000274</div>
<div class="t" style="left:376px;top:363.66px;">00000010</div>
<svg style="left:1px;top:370.57px" width="8" height="8" viewBox="0 0 8 8"><rect x="0" y="0" width="8" height="8" fill="#f4faff"/><path d="M0.5 0v8M0 7.5h8" stroke="#2a6ee0"/><path d="M0 0.5h8" stroke="url(#ig)"/><path d="M7.6 1v6" stroke="#b8d0f0" stroke-width="0.8"/><path d="M2.6 6.6l2.4-4.2M3.8 3.3h1.8" stroke="#102040" stroke-width="0.7"/></svg>
<div class="t" style="left:12.5px;top:373.33px;">math_big__Float_Quo</div>
<div class="t" style="left:184px;top:373.33px;">.text</div>
<div class="t" style="left:234px;top:373.33px;">00000000005248F0</div>
<div class="t" style="left:327px;top:373.33px;">00000299</div>
<div class="t" style="left:376px;top:373.33px;">00000010</div>
<div class="a" style="left:0px;top:379.33px;width:397px;height:9.68px;background:#c8f0c8"></div>
<svg style="left:1px;top:380.23px" width="8" height="8" viewBox="0 0 8 8"><rect x="0" y="0" width="8" height="8" fill="#f4faff"/><path d="M0.5 0v8M0 7.5h8" stroke="#2a6ee0"/><path d="M0 0.5h8" stroke="url(#ig)"/><path d="M7.6 1v6" stroke="#b8d0f0" stroke-width="0.8"/><path d="M2.6 6.6l2.4-4.2M3.8 3.3h1.8" stroke="#102040" stroke-width="0.7"/></svg>
<div class="t" style="left:12.5px;top:382.99px;">math_big__Float_UnmarshalText</div>
<div class="t" style="left:184px;top:382.99px;">.text</div>
<div class="t" style="left:234px;top:382.99px;">0000000000526320</div>
<div class="t" style="left:327px;top:382.99px;">000002BE</div>
<div class="t" style="left:376px;top:382.99px;">00000010</div>
<div class="a" style="left:0px;top:389.0px;width:397px;height:9.68px;background:#c8f0c8"></div>
<svg style="left:1px;top:389.9px" width="8" height="8" viewBox="0 0 8 8"><rect x="0" y="0" width="8" height="8" fill="#f4faff"/><path d="M0.5 0v8M0 7.5h8" stroke="#2a6ee0"/><path d="M0 0.5h8" stroke="url(#ig)"/><path d="M7.6 1v6" stroke="#b8d0f0" stroke-width="0.8"/><path d="M2.6 6.6l2.4-4.2M3.8 3.3h1.8" stroke="#102040" stroke-width="0.7"/></svg>
<div class="t" style="left:12.5px;top:392.66px;">math_big__Float_pow5</div>
<div class="t" style="left:184px;top:392.66px;">.text</div>
<div class="t" style="left:234px;top:392.66px;">0000000000527D50</div>
<div class="t" style="left:327px;top:392.66px;">000002E3</div>
<div class="t" style="left:376px;top:392.66px;">00000010</div>
<svg style="left:1px;top:399.57px" width="8" height="8" viewBox="0 0 8 8"><rect x="0" y="0" width="8" height="8" fill="#f4faff"/><path d="M0.5 0v8M0 7.5h8" stroke="#2a6ee0"/><path d="M0 0.5h8" stroke="url(#ig)"/><path d="M7.6 1v6" stroke="#b8d0f0" stroke-width="0.8"/><path d="M2.6 6.6l2.4-4.2M3.8 3.3h1.8" stroke="#102040" stroke-width="0.7"/></svg>
<div class="t" style="left:12.5px;top:402.33px;">math_big__Float_scan</div>
<div class="t" style="left:184px;top:402.33px;">.text</div>
<div class="t" style="left:234px;top:402.33px;">0000000000529780</div>
<div class="t" style="left:327px;top:402.33px;">00000308</div>
<div class="t" style="left:376px;top:402.33px;">00000010</div>
<svg style="left:1px;top:409.23px" width="8" height="8" viewBox="0 0 8 8"><rect x="0" y="0" width="8" height="8" fill="#f4faff"/><path d="M0.5 0v8M0 7.5h8" stroke="#2a6ee0"/><path d="M0 0.5h8" stroke="url(#ig)"/><path d="M7.6 1v6" stroke="#b8d0f0" stroke-width="0.8"/><path d="M2.6 6.6l2.4-4.2M3.8 3.3h1.8" stroke="#102040" stroke-width="0.7"/></svg>
<div class="t" style="left:12.5px;top:411.99px;">math_big__Float_setBits64</div>
<div class="t" style="left:184px;top:411.99px;">.text</div>
<div class="t" style="left:234px;top:411.99px;">000000000052B1B0</div>
<div class="t" style="left:327px;top:411.99px;">0000032D</div>
<div class="t" style="left:376px;top:411.99px;">00000010</div>
<div class="a" style="left:0px;top:418.0px;width:397px;height:9.68px;background:#c8f0c8"></div>
<svg style="left:1px;top:418.9px" width="8" height="8" viewBox="0 0 8 8"><rect x="0" y="0" width="8" height="8" fill="#f4faff"/><path d="M0.5 0v8M0 7.5h8" stroke="#2a6ee0"/><path d="M0 0.5h8" stroke="url(#ig)"/><path d="M7.6 1v6" stroke="#b8d0f0" stroke-width="0.8"/><path d="M2.6 6.6l2.4-4.2M3.8 3.3h1.8" stroke="#102040" stroke-width="0.7"/></svg>
<div class="t" style="left:12.5px;top:421.66px;">math_big__Float_setExpAndRound</div>
<div class="t" style="left:184px;top:421.66px;">.text</div>
<div class="t" style="left:234px;top:421.66px;">000000000052CBE0</div>
<div class="t" style="left:327px;top:421.66px;">00000052</div>
<div class="t" style="left:376px;top:421.66px;">00000010</div>
<svg style="left:1px;top:428.57px" width="8" height="8" viewBox="0 0 8 8"><rect x="0" y="0" width="8" height="8" fill="#f4faff"/><path d="M0.5 0v8M0 7.5h8" stroke="#2a6ee0"/><path d="M0 0.5h8" stroke="url(#ig)"/><path d="M7.6 1v6" stroke="#b8d0f0" stroke-width="0.8"/><path d="M2.6 6.6l2.4-4.2M3.8 3.3h1.8" stroke="#102040" stroke-width="0.7"/></svg>
<div class="t" style="left:12.5px;top:431.33px;">math_big__Float_uint64</div>
<div class="t" style="left:184px;top:431.33px;">.text</div>
<div class="t" style="left:234px;top:431.33px;">000000000052E610</div>
<div class="t" style="left:327px;top:431.33px;">00000077</div>
<div class="t" style="left:376px;top:431.33px;">00000010</div>
<svg style="left:1px;top:438.23px" width="8" height="8" viewBox="0 0 8 8"><rect x="0" y="0" width="8" height="8" fill="#f4faff"/><path d="M0.5 0v8M0 7.5h8" stroke="#2a6ee0"/><path d="M0 0.5h8" stroke="url(#ig)"/><path d="M7.6 1v6" stroke="#b8d0f0" stroke-width="0.8"/><path d="M2.6 6.6l2.4-4.2M3.8 3.3h1.8" stroke="#102040" stroke-width="0.7"/></svg>
<div class="t" style="left:12.5px;top:440.99px;">math_big__Float_ucmp</div>
<div class="t" style="left:184px;top:440.99px;">.text</div>
<div class="t" style="left:234px;top:440.99px;">0000000000530040</div>
<div class="t" style="left:327px;top:440.99px;">0000009C</div>
<div class="t" style="left:376px;top:440.99px;">00000010</div>
<svg style="left:1px;top:447.9px" width="8" height="8" viewBox="0 0 8 8"><rect x="0" y="0" width="8" height="8" fill="#f4faff"/><path d="M0.5 0v8M0 7.5h8" stroke="#2a6ee0"/><path d="M0 0.5h8" stroke="url(#ig)"/><path d="M7.6 1v6" stroke="#b8d0f0" stroke-width="0.8"/><path d="M2.6 6.6l2.4-4.2M3.8 3.3h1.8" stroke="#102040" stroke-width="0.7"/></svg>
<div class="t" style="left:12.5px;top:450.66px;">math_big__Int_MarshalJSON</div>
<div class="t" style="left:184px;top:450.66px;">.text</div>
<div class="t" style="left:234px;top:450.66px;">0000000000531A70</div>
<div class="t" style="left:327px;top:450.66px;">000000C1</div>
<div class="t" style="left:376px;top:450.66px;">00000010</div>
<div class="a" style="left:0px;top:456.67px;width:397px;height:9.68px;background:#c8f0c8"></div>
<svg style="left:1px;top:457.57px" width="8" height="8" viewBox="0 0 8 8"><rect x="0" y="0" width="8" height="8" fill="#f4faff"/><path d="M0.5 0v8M0 7.5h8" stroke="#2a6ee0"/><path d="M0 0.5h8" stroke="url(#ig)"/><path d="M7.6 1v6" stroke="#b8d0f0" stroke-width="0.8"/><path d="M2.6 6.6l2.4-4.2M3.8 3.3h1.8" stroke="#102040" stroke-width="0.7"/></svg>
<div class="t" style="left:12.5px;top:460.33px;">math_big__Int_MarshalText</div>
<div class="t" style="left:184px;top:460.33px;">.text</div>
<div class="t" style="left:234px;top:460.33px;">00000000005334A0</div>
<div class="t" style="left:327px;top:460.33px;">000000E6</div>
<div class="t" style="left:376px;top:460.33px;">00000010</div>
<svg style="left:1px;top:467.23px" width="8" height="8" viewBox="0 0 8 8"><rect x="0" y="0" width="8" height="8" fill="#f4faff"/><path d="M0.5 0v8M0 7.5h8" stroke="#2a6ee0"/><path d="M0 0.5h8" stroke="url(#ig)"/><path d="M7.6 1v6" stroke="#b8d0f0" stroke-width="0.8"/><path d="M2.6 6.6l2.4-4.2M3.8 3.3h1.8" stroke="#102040" stroke-width="0.7"/></svg>
<div class="t" style="left:12.5px;top:469.99px;">math_big__Int_SetBit</div>
<div class="t" style="left:184px;top:469.99px;">.text</div>
<div class="t" style="left:234px;top:469.99px;">0000000000534ED0</div>
<div class="t" style="left:327px;top:469.99px;">0000010B</div>
<div class="t" style="left:376px;top:469.99px;">00000010</div>
<svg style="left:1px;top:476.9px" width="8" height="8" viewBox="0 0 8 8"><rect x="0" y="0" width="8" height="8" fill="#f4faff"/><path d="M0.5 0v8M0 7.5h8" stroke="#2a6ee0"/><path d="M0 0.5h8" stroke="url(#ig)"/><path d="M7.6 1v6" stroke="#b8d0f0" stroke-width="0.8"/><path d="M2.6 6.6l2.4-4.2M3.8 3.3h1.8" stroke="#102040" stroke-width="0.7"/></svg>
<div class="t" style="left:12.5px;top:479.66px;">math_big__Int_UnmarshalJSON</div>
<div class="t" style="left:184px;top:479.66px;">.text</div>
<div class="t" style="left:234px;top:479.66px;">0000000000536900</div>
<div class="t" style="left:327px;top:479.66px;">00000130</div>
<div class="t" style="left:376px;top:479.66px;">00000010</div>
</div>
<div class="a" style="left:398px;top:60px;width:10px;height:483.5px;background:#f0f0f0;"></div>
<svg style="left:400px;top:63.5px" width="5" height="3"><path d="M0.5 2.5l2-2 2 2" stroke="#606060" fill="none" stroke-width="0.8"/></svg>
<svg style="left:400px;top:537px" width="5" height="3"><path d="M0.5 0.5l2 2 2-2" stroke="#606060" fill="none" stroke-width="0.8"/></svg>
<div class="a" style="left:398.2px;top:204.2px;width:7.8px;height:8.5px;background:#cdcdcd;"></div>
<div class="a" style="left:0px;top:543.5px;width:398px;height:8.5px;background:#f0f0f0;"></div>
<div class="a" style="left:9px;top:543.7px;width:271px;height:8.3px;background:#cdcdcd;"></div>
<svg style="left:3px;top:545.5px" width="3" height="5"><path d="M2.5 0.5l-2 2 2 2" stroke="#606060" fill="none" stroke-width="0.8"/></svg>
<svg style="left:392px;top:545.5px" width="3" height="5"><path d="M0.5 0.5l2 2-2 2" stroke="#606060" fill="none" stroke-width="0.8"/></svg>
<div class="t" style="left:1.75px;top:555.06px;font-size:5.84px;">Line 1579 of 5702</div>
<div class="a" style="left:408px;top:60px;width:872px;height:1px;background:#a0a0a0;"></div>
<div class="a" style="left:408px;top:61px;width:872px;height:493px;background:#fff;"></div>
<div class="a" style="left:408px;top:61px;width:17px;height:501px;background:#fff;"></div>
<div class="a" style="left:425px;top:61px;width:1px;height:501px;background:#1a78dc;"></div>
<div class="a" style="left:645.5px;top:51px;width:1px;height:9px;background:#c8c8c8;"></div>
<div class="a" style="left:963px;top:51px;width:1px;height:9px;background:#c8c8c8;"></div>
<svg style="left:413.25px;top:53px" width="6" height="5" viewBox="0 0 6 5"><path d="M0.5 0.6h3M2.5 0.6v3.6h-2" stroke="#2a72d8" stroke-width="1" fill="none"/><circle cx="4.6" cy="2" r="0.5" fill="#444"/><circle cx="4.6" cy="4" r="0.5" fill="#444"/></svg>
<div class="t" style="left:435px;top:54.68px;font-size:4.4px;color:#000">IDA View-A</div>
<div class="a" style="left:473.5px;top:53.5px;width:5px;height:4.5px;background:transparent;border:0.8px solid #a0a0a0"></div>
<div class="a" style="left:487px;top:50px;width:79px;height:11px;background:#fff;"></div>
<svg style="left:493.25px;top:53px" width="6" height="5" viewBox="0 0 6 5"><path d="M0.5 0.5h5" stroke="#40b8f0" stroke-width="0.9"/><path d="M2 2h3.5M2 3.3h3.5M0.5 4.6h5" stroke="#2060c8" stroke-width="0.8"/></svg>
<div class="t" style="left:512.5px;top:54.68px;font-size:4.4px;color:#a00000">Pseudocode-A</div>
<div class="a" style="left:553.5px;top:53.5px;width:4px;height:4.5px;background:#e84040;"></div>
<svg style="left:572.5px;top:53px" width="6" height="5" viewBox="0 0 6 5"><rect x="0" y="0" width="6" height="5" fill="#2a62c8"/><path d="M1 1.5h2M1 3h4" stroke="#fff" stroke-width="0.7"/></svg>
<div class="t" style="left:586px;top:54.68px;font-size:4.4px;color:#000">Stack of main_main</div>
<div class="a" style="left:633.0px;top:53.5px;width:5px;height:4.5px;background:transparent;border:0.8px solid #a0a0a0"></div>
<svg style="left:652.5px;top:53px" width="6" height="5" viewBox="0 0 6 5"><path d="M1 1a1.6 1.4 0 1 1 2 1.6v1" stroke="#2060d0" stroke-width="0.9" fill="none"/><circle cx="3" cy="4.7" r="0.4" fill="#2060d0"/><path d="M0 0.5h1" stroke="#40b8f0"/></svg>
<div class="t" style="left:676px;top:54.68px;font-size:4.4px;color:#000">Imports</div>
<div class="a" style="left:711.5px;top:53.5px;width:5px;height:4.5px;background:transparent;border:0.8px solid #a0a0a0"></div>
<svg style="left:730.5px;top:53px" width="6" height="5" viewBox="0 0 6 5"><path d="M0.5 0.5h5" stroke="#40b8f0" stroke-width="0.9"/><path d="M2 2h3.5M2 3.3h3.5M0.5 4.6h5" stroke="#2060c8" stroke-width="0.8"/></svg>
<div class="t" style="left:750px;top:54.68px;font-size:4.4px;color:#000">Pseudocode-B</div>
<div class="a" style="left:791.5px;top:53.5px;width:5px;height:4.5px;background:transparent;border:0.8px solid #a0a0a0"></div>
<svg style="left:809.5px;top:53px" width="6" height="5" viewBox="0 0 6 5"><rect x="0.5" y="0.5" width="5" height="4" fill="none" stroke="#2a62c8" stroke-width="0.8"/><path d="M1.5 2.5l1 1 2-2.5" stroke="#20a040" stroke-width="0.8" fill="none"/></svg>
<div class="t" style="left:827.5px;top:54.68px;font-size:4.4px;color:#000">Strings window</div>
<div class="a" style="left:870.0px;top:53.5px;width:5px;height:4.5px;background:transparent;border:0.8px solid #a0a0a0"></div>
<svg style="left:888.5px;top:53px" width="6" height="5" viewBox="0 0 6 5"><path d="M0.5 4.5l4-4M0.5 0.5h3" stroke="#2060d0" stroke-width="0.9" fill="none"/></svg>
<div class="t" style="left:911px;top:54.68px;font-size:4.4px;color:#000">Hex View-1</div>
<div class="a" style="left:950.0px;top:53.5px;width:5px;height:4.5px;background:transparent;border:0.8px solid #a0a0a0"></div>
<svg style="left:968.5px;top:53px" width="6" height="5" viewBox="0 0 6 5"><path d="M0.5 0.6h3M2.5 0.6v3.6h-2" stroke="#2a72d8" stroke-width="1" fill="none"/><circle cx="4.6" cy="2" r="0.5" fill="#444"/><circle cx="4.6" cy="4" r="0.5" fill="#444"/></svg>
<div class="t" style="left:991px;top:54.68px;font-size:4.4px;color:#000">Structures</div>
<div class="a" style="left:1028.5px;top:53.5px;width:5px;height:4.5px;background:transparent;border:0.8px solid #a0a0a0"></div>
<svg style="left:1048.0px;top:53px" width="6" height="5" viewBox="0 0 6 5"><path d="M1 1h1M4 1h1" stroke="#2a72d8" stroke-width="1"/></svg>
<div class="t" style="left:1074px;top:54.68px;font-size:4.4px;color:#000">Enums</div>
<div class="a" style="left:1108.25px;top:53.5px;width:5px;height:4.5px;background:transparent;border:0.8px solid #a0a0a0"></div>
<svg style="left:1127.5px;top:53px" width="6" height="5" viewBox="0 0 6 5"><rect x="0.5" y="1" width="5" height="3.5" fill="none" stroke="#2a62c8" stroke-width="0.9"/><path d="M2 2.5h2" stroke="#2a62c8" stroke-width="0.7"/></svg>
<div class="t" style="left:1154px;top:54.68px;font-size:4.4px;color:#000">Exports</div>
<div class="a" style="left:1188.0px;top:53.5px;width:5px;height:4.5px;background:transparent;border:0.8px solid #a0a0a0"></div>
<div class="a" style="left:426px;top:122.4px;width:854px;height:7.6px;background:#e0e0e0;"></div>
<div class="a" style="left:433.3px;top:122.4px;width:29.3px;height:7.6px;background:#e6e600;"></div>
<div class="t m" style="left:420.53px;top:62.62px;font-size:6.11px;color:#909090;-webkit-text-stroke:0">1</div>
<div class="t m" style="left:426px;top:62.62px;font-size:6.11px;-webkit-text-stroke:0"><span style="color:#505068">__int64 __fastcall </span><span style="color:#000090">main_init_0</span><span style="color:#101040">(</span><span style="color:#505068">__int64 </span><span style="color:#8888f0">a1</span><span style="color:#101040">, </span><span style="color:#505068">__int64 </span><span style="color:#8888f0">a2</span><span style="color:#101040">, </span><span style="color:#505068">__int64 </span><span style="color:#8888f0">a3</span><span style="color:#101040">)</span></div>
<div class="t m" style="left:420.53px;top:70.29px;font-size:6.11px;color:#909090;-webkit-text-stroke:0">2</div>
<div class="t m" style="left:426px;top:70.29px;font-size:6.11px;-webkit-text-stroke:0"><span style="color:#101040">{</span></div>
<div class="t m" style="left:420.53px;top:77.95px;font-size:6.11px;color:#909090;-webkit-text-stroke:0">3</div>
<div class="t m" style="left:426px;top:77.95px;font-size:6.11px;-webkit-text-stroke:0">  <span style="color:#505068">__int64 </span><span style="color:#7070a0">v3</span><span style="color:#101040">; </span><span style="color:#5858ff">// r8</span></div>
<div class="t m" style="left:420.53px;top:85.62px;font-size:6.11px;color:#909090;-webkit-text-stroke:0">4</div>
<div class="t m" style="left:426px;top:85.62px;font-size:6.11px;-webkit-text-stroke:0">  <span style="color:#505068">__int64 </span><span style="color:#7070a0">v4</span><span style="color:#101040">; </span><span style="color:#5858ff">// r9</span></div>
<div class="t m" style="left:420.53px;top:93.29px;font-size:6.11px;color:#909090;-webkit-text-stroke:0">5</div>
<div class="t m" style="left:426px;top:93.29px;font-size:6.11px;-webkit-text-stroke:0">  <span style="color:#505068">void </span><span style="color:#7070a0">*retaddr</span><span style="color:#101040">; </span><span style="color:#5858ff">// [rsp+28h] [rbp+0h]</span></div>
<div class="t m" style="left:420.53px;top:100.95px;font-size:6.11px;color:#909090;-webkit-text-stroke:0">6</div>
<div class="t m" style="left:426px;top:100.95px;font-size:6.11px;-webkit-text-stroke:0"></div>
<div class="t m" style="left:420.53px;top:108.62px;font-size:6.11px;color:#909090;-webkit-text-stroke:0">7</div>
<div class="t m" style="left:426px;top:108.62px;font-size:6.11px;-webkit-text-stroke:0">  <span style="color:#505068">if ( (unsigned __int64)</span><span style="color:#8888f0">&amp;retaddr</span><span style="color:#505068"> &lt;= *(_QWORD *)(</span><span style="color:#000090">__readfsqword</span><span style="color:#101040">(0xFFFFFFF8) + 16) )</span></div>
<div class="a" style="left:409.9px;top:108.7px;width:4.8px;height:4.6px;border-radius:50%;background:#5cc4f4"></div>
<div class="t m" style="left:420.53px;top:116.29px;font-size:6.11px;color:#909090;-webkit-text-stroke:0">8</div>
<div class="t m" style="left:426px;top:116.29px;font-size:6.11px;-webkit-text-stroke:0">    <span style="color:#000090">runtime_morestack_noctxt</span><span style="color:#101040">(</span><span style="color:#8888f0">a1</span><span style="color:#101040">);</span></div>
<div class="a" style="left:409.9px;top:116.37px;width:4.8px;height:4.6px;border-radius:50%;background:#5cc4f4"></div>
<div class="t m" style="left:420.53px;top:123.95px;font-size:6.11px;color:#909090;-webkit-text-stroke:0">9</div>
<div class="t m" style="left:426px;top:123.95px;font-size:6.11px;-webkit-text-stroke:0">  <span style="color:#000090">time_Now</span><span style="color:#101040">(</span><span style="color:#8888f0">a1</span><span style="color:#101040">, </span><span style="color:#8888f0">a2</span><span style="color:#101040">, </span><span style="color:#8888f0">a3</span><span style="color:#101040">);</span></div>
<div class="a" style="left:409.9px;top:124.03px;width:4.8px;height:4.6px;border-radius:50%;background:#5cc4f4"></div>
<div class="t m" style="left:416.87px;top:131.62px;font-size:6.11px;color:#909090;-webkit-text-stroke:0">10</div>
<div class="t m" style="left:426px;top:131.62px;font-size:6.11px;-webkit-text-stroke:0">  <span style="color:#505068">return </span><span style="color:#000090">math_rand__ptr_Rand_Seed</span><span style="color:#101040">(</span><span style="color:#8888f0">a1</span><span style="color:#101040">, </span><span style="color:#8888f0">a2</span><span style="color:#101040">, </span><span style="color:#3030c0">math_rand_globalRand</span><span style="color:#101040">, 0x41E2A6E6B01A0D00LL, </span><span style="color:#f08a10">v3</span><span style="color:#101040">, </span><span style="color:#f08a10">v4</span><span style="color:#101040">, </span><span style="color:#3030c0">math_rand_globalRand</span><span style="color:#101040">);</span></div>
<div class="a" style="left:409.9px;top:131.7px;width:4.8px;height:4.6px;border-radius:50%;background:#5cc4f4"></div>
<div class="t m" style="left:416.87px;top:139.29px;font-size:6.11px;color:#909090;-webkit-text-stroke:0">11</div>
<div class="t m" style="left:426px;top:139.29px;font-size:6.11px;-webkit-text-stroke:0"><span style="color:#101040">}</span></div>
<div class="a" style="left:409.9px;top:139.37px;width:4.8px;height:4.6px;border-radius:50%;background:#5cc4f4"></div>
<div class="a" style="left:426px;top:554px;width:854px;height:8px;background:#f0f0f0;"></div>
<div class="t m" style="left:428px;top:556.19px;font-size:4.45px;color:#000080">0004EAA0 main_init_0:1 (4EAA0)</div>
<div class="a" style="left:513px;top:554.5px;width:1px;height:7px;background:#c8c8c8;"></div>
<svg style="left:2px;top:565.5px" width="6" height="6" viewBox="0 0 6 6"><path d="M0.5 0.5h5v5M1 3h3" stroke="#2060c0" stroke-width="0.9" fill="none"/></svg>
<div class="t" style="left:9px;top:566.66px;font-size:4.3px;">Output window</div>
<div class="a" style="left:1255px;top:567px;width:2px;height:2px;background:#000;"></div>
<div class="a" style="left:1264px;top:567px;width:2px;height:2px;background:#000;"></div>
<div class="a" style="left:1273px;top:567px;width:2px;height:2px;background:#000;"></div>
<div class="a" style="left:0px;top:572px;width:1280px;height:1.7px;background:#7e828c;"></div>
<div class="a" style="left:0px;top:573.7px;width:1271px;height:108px;background:#fff;"></div>
<div class="a" style="left:1271px;top:573.7px;width:9px;height:108px;background:#f0f0f0;"></div>
<svg style="left:1273px;top:576px" width="5" height="3"><path d="M0.5 2.5l2-2 2 2" stroke="#606060" fill="none" stroke-width="0.8"/></svg>
<svg style="left:1273px;top:676.5px" width="5" height="3"><path d="M0.5 0.5l2 2 2-2" stroke="#606060" fill="none" stroke-width="0.8"/></svg>
<div class="a" style="left:1271.5px;top:663.75px;width:7.5px;height:9.25px;background:#cdcdcd;"></div>
<div class="t m" style="left:2.5px;top:576.12px;font-size:6.11px;color:#000">57D4C8: variables would overlap: rcx.8 and rdx.16</div>
<div class="t m" style="left:2.5px;top:583.79px;font-size:6.11px;color:#000">57D4C8: variables would overlap: r8.8 and r8.16</div>
<div class="t m" style="left:2.5px;top:591.45px;font-size:6.11px;color:#000">57D4C8: variables would overlap: r9.8 and r8.16</div>
<div class="t m" style="left:2.5px;top:599.12px;font-size:6.11px;color:#000">585C08: using guessed type __int64 __fastcall encoding_asn1_UnmarshalWithParams(__int64, __int64, __int64, __int64, __int64, __int64, __int64, __int64, __int128, __int128);</div>
<div class="t m" style="left:2.5px;top:606.79px;font-size:6.11px;color:#000">57E828: using guessed type __int64 __fastcall crypto_x509_getPublicKeyAlgorithmFromOID(__int64, __int64, __int64, __int64);</div>
<div class="t m" style="left:2.5px;top:614.45px;font-size:6.11px;color:#000">57F6F8: using guessed type __int64 __fastcall crypto_x509_parsePublicKey(__int64, __int64, __int128, __int128);</div>
<div class="t m" style="left:2.5px;top:622.12px;font-size:6.11px;color:#000">Caching 'Strings window'... ok</div>
<div class="t m" style="left:2.5px;top:629.79px;font-size:6.11px;color:#000">4D7AA5: variable 'v3' is possibly undefined</div>
<div class="t m" style="left:2.5px;top:637.45px;font-size:6.11px;color:#000">4D7818: using guessed type __int64 __fastcall math_rand___Rand__Int63n(__int64, __int64, __int64);</div>
<div class="t m" style="left:2.5px;top:645.12px;font-size:6.11px;color:#000">4D7948: using guessed type __int64 __fastcall math_rand___Rand__Int31n(__int64, _DWORD, _DWORD, _DWORD);</div>
<div class="t m" style="left:2.5px;top:652.79px;font-size:6.11px;color:#000">561261: variable 'v3' is possibly undefined</div>
<div class="t m" style="left:2.5px;top:660.45px;font-size:6.11px;color:#000">561261: variable 'v4' is possibly undefined</div>
<div class="t m" style="left:2.5px;top:668.12px;font-size:6.11px;color:#000">4D79C8: using guessed type __int64 __fastcall time_Now(__int64, __int64, __int64);</div>
<div class="t m" style="left:2.5px;top:675.79px;font-size:6.11px;color:#000">525828: using guessed type __int64 math_rand_globalRand;</div>
<div class="a" style="left:0px;top:681.7px;width:1280px;height:1px;background:#6e6e6e;"></div>
<div class="a" style="left:1px;top:683px;width:20px;height:8px;background:#e3e3e3;"></div>
<div class="t" style="left:8px;top:686.21px;font-size:4.0px;">IDC</div>
<div class="a" style="left:22px;top:682.7px;width:1257px;height:8.3px;background:#fff;"></div>
<div class="a" style="left:1279px;top:682.7px;width:1px;height:8.3px;background:#a0a0a0;"></div>
<div class="t m" style="left:1px;top:694.0px;font-size:6.0px;">AU:</div>
<div class="t m" style="left:18.7px;top:694.0px;font-size:6.0px;">idle</div>
<div class="a" style="left:41px;top:691.5px;width:1px;height:8px;background:#c8c8c8;"></div>
<div class="t m" style="left:42.6px;top:693.85px;font-size:6.2px;">Down</div>
<div class="t m" style="left:68.5px;top:694.0px;font-size:6.0px;">Disk:</div>
<div class="t m" style="left:90.4px;top:693.54px;font-size:6.6px;">44GB</div>
<div class="a" style="left:0px;top:700px;width:1280px;height:20px;background:#0f0f0f;"></div>
<svg style="left:8px;top:706px" width="8" height="8" viewBox="0 0 8 8"><path d="M0 0.6L3.5 0.1V3.7H0zM4 0L8 -0.5V3.7H4zM0 4.2H3.5V7.9L0 7.4zM4 4.2H8V8.5L4 8z" fill="#fff"/></svg>
<div class="a" style="left:24px;top:700px;width:172px;height:20px;background:#3c3c3c;border:1px solid #5e5e5e;border-left:0"></div>
<svg style="left:30px;top:706px" width="8" height="8" viewBox="0 0 8 8"><circle cx="5" cy="3" r="2.3" fill="none" stroke="#ddd" stroke-width="0.8"/><path d="M3.3 4.7L0.5 7.5" stroke="#ddd" stroke-width="0.9"/></svg>
<div class="t" style="left:44px;top:706.82px;font-size:7.3px;color:#d4d4d4">Type here to search</div>
<div class="a" style="left:203px;top:710px;width:5px;height:2px;background:#fff;"></div>
<div class="a" style="left:210px;top:707px;width:1.2px;height:8px;background:#fff;"></div>
<div class="a" style="left:373px;top:700px;width:23px;height:20px;background:#2e2e2e;"></div>
<svg style="left:228px;top:704px" width="12" height="12" viewBox="0 0 12 12"><circle cx="6" cy="6" r="5.5" fill="#1a8fd8"/><path d="M2 8a5 4 0 0 1 9-3" stroke="#4cd870" stroke-width="2" fill="none"/><circle cx="5" cy="8.5" r="2" fill="#0f0f0f"/></svg>
<svg style="left:252px;top:704px" width="12" height="12" viewBox="0 0 12 12"><path d="M0 2h5l1 1h6v8H0z" fill="#f5c242"/><path d="M0 5h12v6H0z" fill="#ffd866"/><path d="M3 8h6v3H3z" fill="#2a7de0"/></svg>
<svg style="left:277px;top:704px" width="12" height="12" viewBox="0 0 12 12"><rect x="0" y="1" width="12" height="10" fill="#2d2d2d" stroke="#888" stroke-width="0.6"/><path d="M2 4l2 1.5-2 1.5M5 8h4" stroke="#eee" stroke-width="0.8" fill="none"/></svg>
<svg style="left:302px;top:704px" width="12" height="12" viewBox="0 0 12 12"><path d="M9 0l3 1.5v9L9 12 3 7 1 8.5 0 8V4l1-.5 2 1.5z" fill="#1f9ee8"/><path d="M9 3.5L5 6l4 2.5z" fill="#0f0f0f"/></svg>
<svg style="left:327px;top:704px" width="12" height="12" viewBox="0 0 12 12"><rect x="3" y="0.5" width="8" height="7" fill="none" stroke="#1e90e0" stroke-width="1.4"/><rect x="1" y="4.5" width="7" height="7" fill="none" stroke="#f08a1c" stroke-width="1.6"/></svg>
<svg style="left:352px;top:704px" width="12" height="12" viewBox="0 0 12 12"><circle cx="6" cy="6" r="5.5" fill="#d8dcff"/><circle cx="6" cy="6" r="4.3" fill="#2e3a8c"/><rect x="4" y="5.5" width="4" height="3.5" fill="#fff"/><path d="M4.7 5.5v-1.3a1.3 1.3 0 0 1 2.6 0v1.3" stroke="#fff" fill="none" stroke-width="0.8"/></svg>
<svg style="left:377px;top:704px" width="12" height="12" viewBox="0 0 12 12"><rect x="0" y="0" width="12" height="12" fill="#e8dcd0"/><path d="M1 2Q6 -1 10 3L11 8 8 7 5 5 2 9z" fill="#2a1a12"/><path d="M4 5h4v4H4z" fill="#dba889"/><path d="M3 9h8v3H3z" fill="#b52222"/></svg>
<svg style="left:402px;top:704px" width="12" height="12" viewBox="0 0 12 12"><path d="M2 1h8l-1 10H1z" fill="#8fd0f0"/><path d="M3 3h5M3 5h5M3 7h4" stroke="#3a78a8" stroke-width="0.6"/></svg>
<svg style="left:427px;top:704px" width="12" height="12" viewBox="0 0 12 12"><ellipse cx="6" cy="7" rx="5.5" ry="4.5" fill="#f2e6d8"/><circle cx="3.5" cy="6" r="1" fill="#e03030"/><circle cx="6" cy="4.5" r="1" fill="#30a0e0"/><circle cx="8.5" cy="6" r="1" fill="#40b040"/><path d="M7 10L11 2" stroke="#c08040" stroke-width="1.2"/></svg>
<svg style="left:452px;top:704px" width="12" height="12" viewBox="0 0 12 12"><circle cx="6" cy="6" r="5.5" fill="#2aa0e0"/><path d="M2.5 6l6.5-3-1 6-2-1.5z" fill="#fff"/><rect x="5.5" y="7.5" width="6.5" height="4.5" rx="1.5" fill="#e02020"/></svg>
<div class="a" style="left:224px;top:719px;width:20px;height:1px;background:#7ab8e8;"></div>
<div class="a" style="left:248px;top:719px;width:20px;height:1px;background:#7ab8e8;"></div>
<div class="a" style="left:273px;top:719px;width:20px;height:1px;background:#7ab8e8;"></div>
<div class="a" style="left:298px;top:719px;width:20px;height:1px;background:#7ab8e8;"></div>
<div class="a" style="left:323px;top:719px;width:20px;height:1px;background:#7ab8e8;"></div>
<div class="a" style="left:348px;top:719px;width:20px;height:1px;background:#7ab8e8;"></div>
<div class="a" style="left:373px;top:719px;width:20px;height:1px;background:#99ccf0;"></div>
<div class="a" style="left:398px;top:719px;width:20px;height:1px;background:#7ab8e8;"></div>
<div class="a" style="left:423px;top:719px;width:20px;height:1px;background:#7ab8e8;"></div>
<div class="a" style="left:448px;top:719px;width:20px;height:1px;background:#7ab8e8;"></div>
<svg style="left:1143px;top:708px" width="6" height="4"><path d="M0.5 3.5l2.5-2.5 2.5 2.5" stroke="#ddd" fill="none" stroke-width="0.8"/></svg>
<svg style="left:1154px;top:707px" width="10" height="6"><path d="M1 5.5h8a2 2 0 0 0-1-3.5 3 3 0 0 0-5.5 0.5A1.5 1.5 0 0 0 1 5.5z" fill="#e8e8e8"/></svg>
<svg style="left:1167px;top:707px" width="9" height="6"><path d="M0.5 1.5h2l1 1h5v3h-8z" fill="#e8e8e8"/></svg>
<svg style="left:1180px;top:706px" width="7" height="7"><path d="M0.5 6.5a6 6 0 0 1 6-6M2 6.5a4.5 4.5 0 0 1 4.5-4.5M3.5 6.5a3 3 0 0 1 3-3" stroke="#ddd" fill="none" stroke-width="0.7"/></svg>
<svg style="left:1191px;top:706px" width="8" height="7"><path d="M0.5 2.5h1.5l2-2v6l-2-2H0.5z" fill="none" stroke="#ddd" stroke-width="0.7"/><path d="M5.5 1.5a3 3 0 0 1 0 4M6.5 0.5a4.5 4.5 0 0 1 0 6" stroke="#ddd" fill="none" stroke-width="0.6"/></svg>
<div class="t" style="left:1204px;top:707.57px;font-size:5px;color:#e0e0e0">ENG</div>
<div class="t" style="left:1225px;top:704.11px;font-size:5.3px;color:#fff">7:16 pm</div>
<div class="t" style="left:1222.5px;top:712.97px;font-size:5px;color:#e8e8e8">17/09/2021</div>
<svg style="left:1258px;top:706px" width="7" height="8"><path d="M0.5 0.5v5.5h1.5M1.5 6l1 1.5 1-1.5h2.5" stroke="#ddd" fill="none" stroke-width="0.8"/></svg>
<div class="a" style="left:1277px;top:700px;width:1px;height:20px;background:#555;"></div>
</body></html>
